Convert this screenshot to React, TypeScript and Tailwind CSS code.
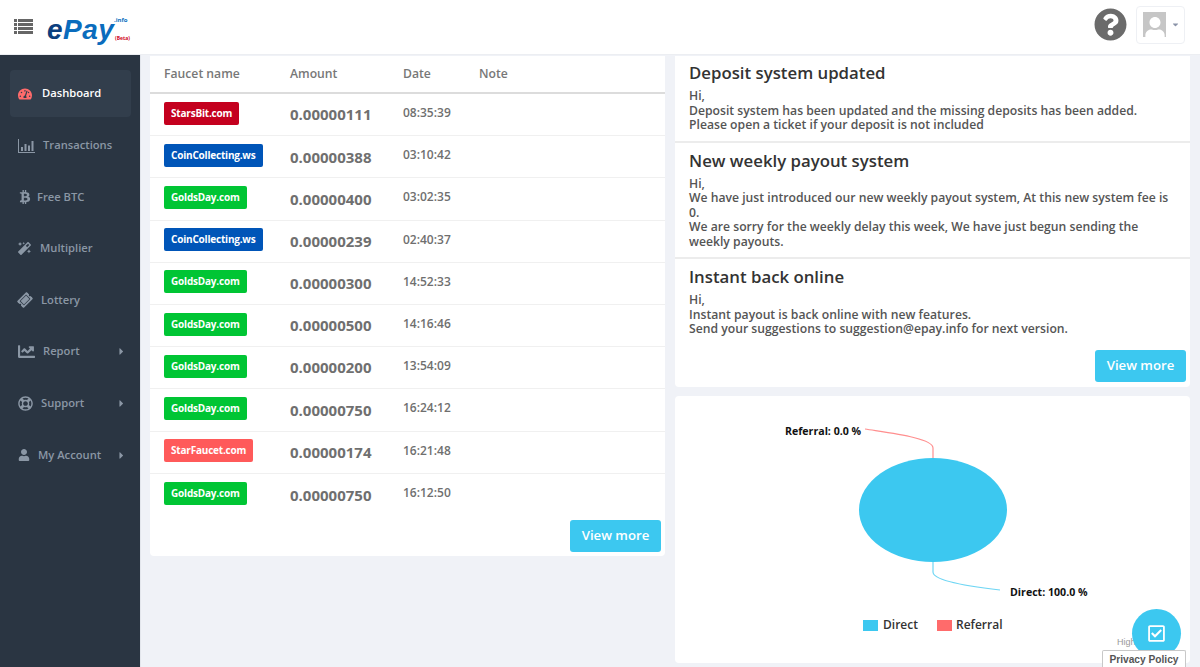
import { ReactNode } from "react";
import {
  FaBtc,
  FaCaretDown,
  FaCaretRight,
  FaChartLine,
  FaMagic,
  FaQuestionCircle,
  FaRegCheckSquare,
  FaRegLifeRing,
  FaTachometerAlt,
  FaTicketAlt,
  FaUser,
} from "react-icons/fa";

const BarIcon = () => (
  <svg width="17" height="14" viewBox="0 0 17 14" fill="currentColor">
    <path d="M0 0h1v13h16v1H0z" />
    <path d="M3 8h2v4H3zM6.500 5h2v7h-2zM10 6.500h2V12h-2zM13.500 2h2v10h-2z" />
  </svg>
);

const MenuIcon = () => (
  <svg width="19" height="15" viewBox="0 0 19 15" fill="#666">
    <path d="M0 0h3v3H0zM4 0h15v3H4zM0 4h3v3H0zM4 4h15v3H4zM0 8h3v3H0zM4 8h15v3H4zM0 12h3v3H0zM4 12h15v3H4z" />
  </svg>
);

const navItems: { label: string; icon: ReactNode; gap: string; caret?: boolean }[] = [
  { label: "Transactions", icon: <BarIcon />, gap: "gap-2" },
  { label: "Free BTC", icon: <FaBtc className="text-[14px]" />, gap: "gap-[5px]" },
  { label: "Multiplier", icon: <FaMagic className="text-[13px]" />, gap: "gap-[9px]" },
  { label: "Lottery", icon: <FaTicketAlt className="text-[14px] -rotate-45" />, gap: "gap-[9px]" },
  { label: "Report", icon: <FaChartLine className="text-[17px]" />, gap: "gap-2", caret: true },
  { label: "Support", icon: <FaRegLifeRing className="text-[15px]" />, gap: "gap-2", caret: true },
  { label: "My Account", icon: <FaUser className="text-[12px]" />, gap: "gap-2", caret: true },
];

const faucets = [
  { name: "StarsBit.com", color: "bg-[#c4001e]", amount: "0.00000111", date: "08:35:39" },
  { name: "CoinCollecting.ws", color: "bg-[#0055b8]", amount: "0.00000388", date: "03:10:42" },
  { name: "GoldsDay.com", color: "bg-[#00c534]", amount: "0.00000400", date: "03:02:35" },
  { name: "CoinCollecting.ws", color: "bg-[#0055b8]", amount: "0.00000239", date: "02:40:37" },
  { name: "GoldsDay.com", color: "bg-[#00c534]", amount: "0.00000300", date: "14:52:33" },
  { name: "GoldsDay.com", color: "bg-[#00c534]", amount: "0.00000500", date: "14:16:46" },
  { name: "GoldsDay.com", color: "bg-[#00c534]", amount: "0.00000200", date: "13:54:09" },
  { name: "GoldsDay.com", color: "bg-[#00c534]", amount: "0.00000750", date: "16:24:12" },
  { name: "StarFaucet.com", color: "bg-[#ff5a5a]", amount: "0.00000174", date: "16:21:48" },
  { name: "GoldsDay.com", color: "bg-[#00c534]", amount: "0.00000750", date: "16:12:50" },
];

const news = [
  {
    title: "Deposit system updated",
    lines: [
      "Hi,",
      "Deposit system has been updated and the missing deposits has been added.",
      "Please open a ticket if your deposit is not included",
    ],
  },
  {
    title: "New weekly payout system",
    lines: [
      "Hi,",
      "We have just introduced our new weekly payout system, At this new system fee is 0.",
      "We are sorry for the weekly delay this week, We have just begun sending the weekly payouts.",
    ],
  },
  {
    title: "Instant back online",
    lines: [
      "Hi,",
      "Instant payout is back online with new features.",
      "Send your suggestions to suggestion@epay.info for next version.",
    ],
  },
];

const ViewMore = () => (
  <button className="w-[91px] h-8 rounded-[3px] bg-[#3cc8f0] text-white text-[13.2px] font-semibold">
    View more
  </button>
);

export default function App() {
  return (
    <div className="relative w-[1200px] h-[667px] overflow-hidden bg-[#f0f2f7] font-['Open_Sans',sans-serif]">
      {/* header */}
      <header className="h-[55px] bg-white flex items-center pl-[14px] pr-[15px] border-b border-[#eceef2]">
        <div className="mb-px">
          <MenuIcon />
        </div>
        <div className="relative ml-[14px] mt-[6px] w-[85px] h-[34px]">
          <span className="font-['Liberation_Sans',sans-serif] italic font-bold text-[28px] leading-[34px] tracking-[0.5px] text-[#0b3f7e]">
            e<span className="text-[#0a6cbd]">Pay</span>
          </span>
          <span className="absolute left-[67px] top-[3px] text-[6px] font-bold text-[#0a70c0]">.info</span>
          <span className="absolute left-[68px] top-[22px] text-[5px] font-bold text-[#d0021b]">(Beta)</span>
        </div>
        <FaQuestionCircle className="ml-auto text-[33px] text-[#6b6b6b] mb-[6px]" />
        <div className="ml-[9px] mb-[5px] w-[49px] h-[38px] border border-[#eef0f4] rounded flex items-center pl-[6px] gap-[5px]">
          <div className="w-[23px] h-[25px] bg-[#c6c6c6] flex items-end justify-center overflow-hidden">
            <FaUser className="text-[22px] text-white -mb-[2px]" />
          </div>
          <FaCaretDown className="text-[9px] text-[#8a93a8]" />
        </div>
      </header>

      <div className="flex h-[612px]">
        {/* sidebar */}
        <aside className="w-[141px] shrink-0 bg-[#2a3542] border-r border-[#e3e6ec] pt-[15px] pl-[10px] pr-[9px] text-[11.2px] font-semibold text-[#8b97a5]">
          <div className="h-[47px] mb-[5px] rounded bg-[#323e4c] flex items-center pl-2 gap-[10px] text-white">
            <FaTachometerAlt className="text-[14px] text-[#ff6b6b]" />
            Dashboard
          </div>
          {navItems.map((item) => (
            <div key={item.label} className={`h-[47px] mb-[4.6px] flex items-center pl-2 ${item.gap}`}>
              {item.icon}
              {item.label}
              {item.caret && <FaCaretRight className="ml-auto mr-[4px] text-[11px]" />}
            </div>
          ))}
        </aside>

        <main className="flex-1 flex gap-[10px] pl-[9px] pt-px pr-[10px]">
          {/* faucet table */}
          <section className="w-[515px] h-[500px] bg-white rounded-b shrink-0">
            <div className="h-[38px] flex items-center pl-[14px] text-[12.2px] font-semibold text-[#777] border-b-2 border-[#dcdcdc]">
              <span className="w-[126px]">Faucet name</span>
              <span className="w-[113px]">Amount</span>
              <span className="w-[76px]">Date</span>
              <span>Note</span>
            </div>
            <div>
              {faucets.map((row, i) => (
                <div key={i} className="h-[42.2px] flex items-center pl-[14px] border-b border-[#f0f0f0] last:border-b-0">
                  <span className="w-[126px] -mt-[2px]">
                    <span className={`inline-block align-top h-[23px] leading-[23px] px-[7px] rounded-[2px] text-white text-[10px] tracking-[-0.2px] font-bold ${row.color}`}>
                      {row.name}
                    </span>
                  </span>
                  <span className="w-[113px] text-[15px] font-bold text-[#6f6f6f]">{row.amount}</span>
                  <span className="text-xs font-semibold text-[#6f6f6f] -mt-[3px]">{row.date}</span>
                </div>
              ))}
            </div>
            <div className="flex justify-end pr-1 pt-[4px]">
              <ViewMore />
            </div>
          </section>

          {/* right column */}
          <div className="w-[515px] flex flex-col gap-[9px]">
            <section className="h-[331px] bg-white rounded-b">
              <div>
                {news.map((item) => (
                  <div key={item.title} className="px-[14px] pt-[7px] first:pt-[6px] pb-2 border-b-2 border-[#ececec] last:border-b-0 last:pb-0">
                    <h3 className="text-[16.8px] leading-[22px] pb-[5px] font-semibold text-[#333]">{item.title}</h3>
                    {item.lines.map((line) => (
                      <p key={line} className="text-[12.2px] leading-[14.5px] font-semibold text-[#555]">{line}</p>
                    ))}
                  </div>
                ))}
              </div>
              <div className="flex justify-end pr-1 pt-[13px]">
                <ViewMore />
              </div>
            </section>

            <section className="h-[267px] bg-white rounded flex flex-col">
              <svg width="515" height="221" viewBox="675 396 515 221" className="block">
                <path d="M865 429C890 433 933 438 933 448V458" fill="none" stroke="#ff8f8f" strokeWidth="1.2" />
                <path d="M933 562V572C933 580 965 586 1000 590" fill="none" stroke="#6fd6f4" strokeWidth="1.2" />
                <ellipse cx="933" cy="510" rx="74" ry="52" fill="#3cc8f0" />
                <text x="785" y="435" fontSize="10.600" fontWeight="700" fill="#111">Referral: 0.0 %</text>
                <text x="1010" y="596" fontSize="10.600" fontWeight="700" fill="#111">Direct: 100.0 %</text>
              </svg>
              <div className="flex items-center pl-[188px] text-xs font-semibold text-[#333]">
                <span className="w-[15px] h-[11px] bg-[#3cc8f0] mr-[5px]" />
                <span className="w-[54px]">Direct</span>
                <span className="w-[15px] h-[11px] bg-[#ff6b6b] mr-[4px]" />
                <span>Referral</span>
              </div>
            </section>
          </div>
        </main>
      </div>

      {/* floating bits */}
      <span className="absolute left-[1117px] top-[636px] text-[9px] text-[#999] font-['Liberation_Sans',sans-serif]">High</span>
      <button className="absolute left-[1132px] top-[609px] w-[49px] h-[49px] rounded-full bg-[#3cc8f0] flex items-center justify-center text-white">
        <FaRegCheckSquare className="text-[19px]" />
      </button>
      <div className="absolute left-[1102px] top-[650px] w-[84px] h-[17px] bg-white border border-b-0 border-[#c8c8c8] rounded-t-[2px] text-center text-[10.2px] leading-[17px] font-bold text-[#555] font-['Liberation_Sans',sans-serif]">
        Privacy Policy
      </div>
    </div>
  );
}
